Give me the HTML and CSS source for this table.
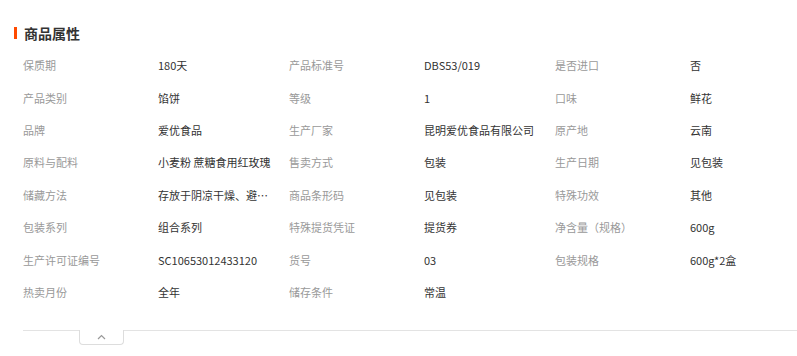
FILE: index.html
```html
<!DOCTYPE html>
<html lang="zh">
<head>
<meta charset="utf-8">
<link rel="stylesheet" href="styles.css">
</head>
<body>
<section class="attrs">
  <h2 class="title">商品属性</h2>
  <div class="grid">
    <div class="k">保质期</div><div class="v">180天</div>
    <div class="k">产品标准号</div><div class="v">DBS53/019</div>
    <div class="k">是否进口</div><div class="v">否</div>

    <div class="k">产品类别</div><div class="v">馅饼</div>
    <div class="k">等级</div><div class="v">1</div>
    <div class="k">口味</div><div class="v">鲜花</div>

    <div class="k">品牌</div><div class="v">爱优食品</div>
    <div class="k">生产厂家</div><div class="v">昆明爱优食品有限公司</div>
    <div class="k">原产地</div><div class="v">云南</div>

    <div class="k">原料与配料</div><div class="v">小麦粉 蔗糖食用红玫瑰</div>
    <div class="k">售卖方式</div><div class="v">包装</div>
    <div class="k">生产日期</div><div class="v">见包装</div>

    <div class="k">储藏方法</div><div class="v">存放于阴凉干燥、避光处</div>
    <div class="k">商品条形码</div><div class="v">见包装</div>
    <div class="k">特殊功效</div><div class="v">其他</div>

    <div class="k">包装系列</div><div class="v">组合系列</div>
    <div class="k">特殊提货凭证</div><div class="v">提货券</div>
    <div class="k">净含量（规格）</div><div class="v">600g</div>

    <div class="k">生产许可证编号</div><div class="v">SC10653012433120</div>
    <div class="k">货号</div><div class="v">03</div>
    <div class="k">包装规格</div><div class="v">600g*2盒</div>

    <div class="k">热卖月份</div><div class="v">全年</div>
    <div class="k">储存条件</div><div class="v">常温</div>
  </div>
  <div class="fold">
    <button class="fold-tab" type="button" aria-label="收起">
      <svg width="9" height="6" viewBox="0 0 9 6"><path d="M1 5 L4.5 1.5 L8 5" fill="none" stroke="#999" stroke-width="1.2"/></svg>
    </button>
  </div>
</section>
</body>
</html>
```
FILE: styles.css
```css
* { box-sizing: border-box; }
html, body { margin: 0; padding: 0; background: #fff; }
body {
  font-family: "Noto Sans CJK SC", "Noto Sans", sans-serif;
  overflow: hidden;
  width: 797px;
}
.attrs {
  padding: 24px 0 0 14px;
}
.title {
  margin: 0;
  font-size: 14px;
  font-weight: bold;
  color: #333;
  line-height: 18px;
  height: 18px;
  position: relative;
  padding-left: 10px;
}
.title::before {
  content: "";
  position: absolute;
  left: 0;
  top: 3px;
  width: 3px;
  height: 12px;
  background: #ff4a00;
}
.grid {
  margin-top: 7px;
  margin-left: 9px;
  display: grid;
  grid-template-columns: 135px 131px 135px 131px 135px 131px;
  grid-auto-rows: 32.4px;
  align-items: center;
  font-size: 11px;
  line-height: 16px;
}
.k { color: #999; white-space: nowrap; }
.v {
  color: #333;
  white-space: nowrap;
  overflow: hidden;
  text-overflow: ellipsis;
  max-width: 116px;
}
.fold {
  margin: 22px 0 0 9px;
  border-top: 1px solid #e3e3e3;
  height: 26px;
  padding-left: 56px;
}
.fold-tab {
  display: flex;
  align-items: center;
  justify-content: center;
  margin-top: -1px;
  width: 45px;
  height: 15px;
  padding: 0;
  background: #fff;
  border: 1px solid #ddd;
  border-top: none;
  border-radius: 0 0 4px 4px;
}
```
